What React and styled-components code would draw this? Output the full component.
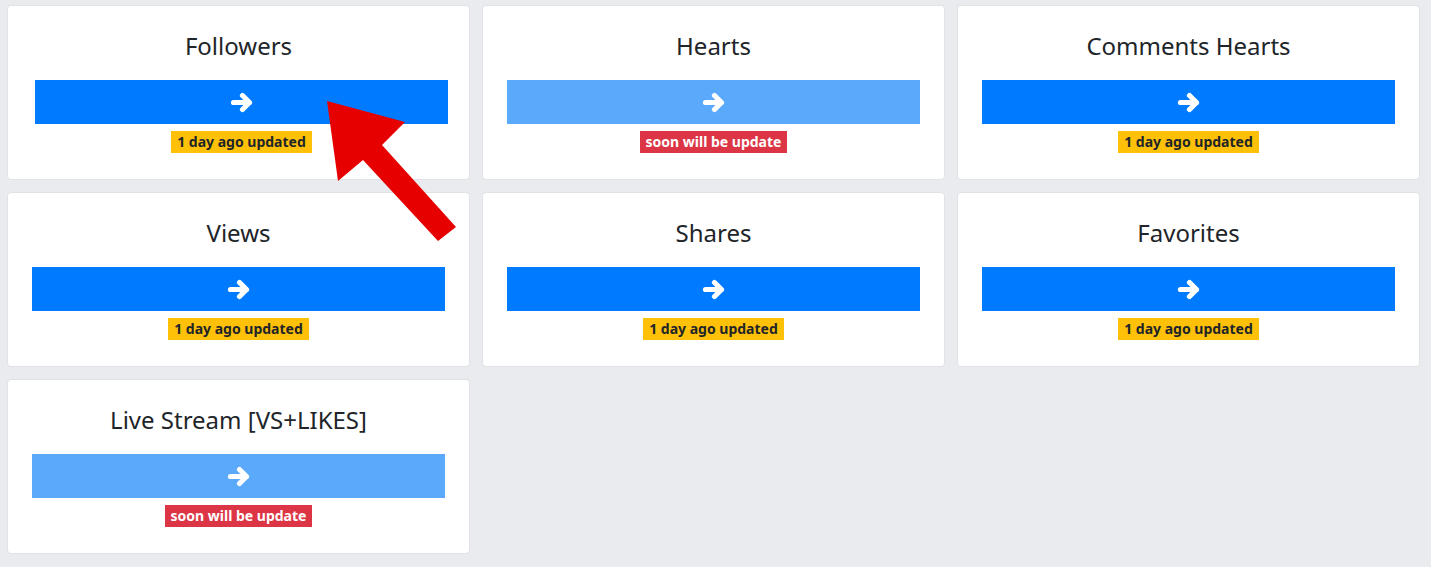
import React from 'react';
import styled, { createGlobalStyle } from 'styled-components';

const GlobalStyle = createGlobalStyle`
  body {
    margin: 0;
    background: #e9ebee;
    font-family: "Noto Sans", "Open Sans", sans-serif;
    color: #212529;
  }
`;

const Page = styled.div`
  position: relative;
  width: 1431px;
  height: 567px;
  box-sizing: border-box;
  padding: 5px 11px 0 7px;
`;

const Grid = styled.div`
  display: grid;
  grid-template-columns: repeat(3, 463px);
  grid-auto-rows: 175px;
  gap: 12px;
`;

const Card = styled.div`
  box-sizing: border-box;
  background: #fff;
  border: 1px solid #dfe2e6;
  border-radius: 4px;
  padding: 25px 24px 0;
  display: flex;
  flex-direction: column;
  align-items: center;
`;

const Title = styled.h4`
  margin: 0 0 20px;
  font-size: 24px;
  font-weight: 400;
  line-height: 29px;
  text-align: center;
  white-space: nowrap;
`;

const Body = styled.div`
  width: 100%;
  box-sizing: border-box;
  display: flex;
  flex-direction: column;
  align-items: center;
  padding-left: ${(p) => (p.$shift ? '3px' : '0')};
  margin-right: ${(p) => (p.$shift ? '-3px' : '0')};
  width: ${(p) => (p.$shift ? 'calc(100% + 3px)' : '100%')};
`;

const GoButton = styled.button`
  width: 100%;
  height: 44px;
  border: none;
  border-radius: 0;
  background: ${(p) => (p.$disabled ? '#5aa9fb' : '#007bff')};
  color: #fff;
  display: flex;
  align-items: center;
  justify-content: center;
  cursor: pointer;
  margin-bottom: 7px;
  padding: 0;
`;

const Badge = styled.span`
  display: inline-block;
  height: 22px;
  line-height: 22px;
  padding: 0 6px;
  font-size: 14px;
  font-weight: 700;
  background: ${(p) => (p.$soon ? '#dc3545' : '#ffc107')};
  color: ${(p) => (p.$soon ? '#fff' : '#212529')};
`;

const Pointer = styled.svg`
  position: absolute;
  left: 0;
  top: 0;
  pointer-events: none;
`;

const ArrowIcon = () => (
  <svg width="24" height="21" viewBox="0 0 24 21" fill="none">
    <path
      d="M3.5 10.5H19.5M12.5 3.5L19.5 10.5L12.5 17.5"
      stroke="#fff"
      strokeWidth="5.2"
      strokeLinecap="round"
      strokeLinejoin="round"
    />
  </svg>
);

const items = [
  { title: 'Followers', soon: false },
  { title: 'Hearts', soon: true },
  { title: 'Comments Hearts', soon: false },
  { title: 'Views', soon: false },
  { title: 'Shares', soon: false },
  { title: 'Favorites', soon: false },
  { title: 'Live Stream [VS+LIKES]', soon: true },
];

export default function App() {
  return (
    <Page>
      <GlobalStyle />
      <Grid>
        {items.map((it, i) => (
          <Card key={it.title}>
            <Title>{it.title}</Title>
            <Body $shift={i === 0}>
              <GoButton $disabled={it.soon}>
                <ArrowIcon />
              </GoButton>
              <Badge $soon={it.soon}>
                {it.soon ? 'soon will be update' : '1 day ago updated'}
              </Badge>
            </Body>
          </Card>
        ))}
      </Grid>
      <Pointer width="1431" height="567" viewBox="0 0 1431 567">
        <polygon
          points="327,101 405,122 382,145 456,227 438,241 363,160 338,181"
          fill="#e60000"
        />
      </Pointer>
    </Page>
  );
}
